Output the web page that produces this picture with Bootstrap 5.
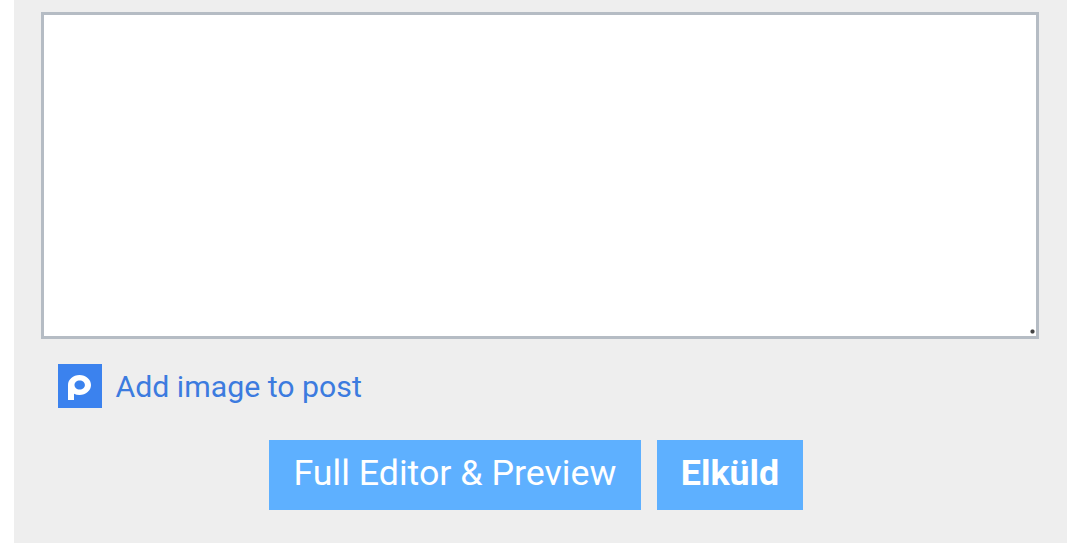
<!DOCTYPE html>
<html lang="hu">
<head>
<meta charset="utf-8">
<title>Reply</title>
<link href="https://cdn.jsdelivr.net/npm/bootstrap@5.3.0/dist/css/bootstrap.min.css" rel="stylesheet">
<style>
html, body { height: 543px; overflow: hidden; background: #fff; font-family: Roboto, sans-serif; }
.reply-panel { margin: 0 13px 0 14px; height: 543px; background: #eee; padding: 12px 28px 0 27px; }
.reply-box { display: block; width: 100%; height: 327px; border: 3px solid #b5bcc4; background: #fff; border-radius: 0; outline: 0; padding: 4px; }
.reply-box::-webkit-resizer { background: radial-gradient(circle at 11.5px 10.500px, #444 0 1.5px, transparent 2.6px); }
.img-row { margin: 25px 0 0 17px; gap: 13.5px; }
.img-logo { width: 44px; height: 44px; display: block; flex: none; }
.img-link { color: #3c7bdf; font-size: 30.25px; line-height: 44px; text-decoration: none; position: relative; top: 1px; }
.btn-row { margin-top: 32px; gap: 16px; padding-right: 8px; }
.send-btn { background: #5eb0ff; border: 0; border-radius: 0; color: #fff; font-size: 35.75px; height: 70px; padding: 0 25px 3px; }
.send-btn:hover { background: #5eb0ff; color: #fff; }
.send-first { padding-left: 24.5px; padding-right: 24.5px; }
.send-strong { font-weight: 700; padding-left: 24px; padding-right: 24px; }
</style>
</head>
<body>
<div class="reply-panel">
  <textarea class="reply-box" aria-label="Message"></textarea>
  <div class="img-row d-flex align-items-center">
    <svg class="img-logo" viewBox="0 0 44 44" aria-hidden="true">
      <rect width="44" height="44" fill="#3b82ee"/>
      <path fill="#fff" fill-rule="evenodd" d="M10 21C10 15.500 15.100 11 21.500 11C27.900 11 33 15.500 33 21C33 26.500 27.900 31 21.500 31C19.500 31 17.700 30.600 16 29.800V36H10ZM16.500 21C16.500 23.500 18.700 25.500 21.700 25.500C24.700 25.500 26.900 23.500 26.900 21C26.900 18.500 24.700 16.500 21.700 16.500C18.700 16.500 16.500 18.500 16.500 21Z"/>
    </svg>
    <a class="img-link" href="#">Add image to post</a>
  </div>
  <div class="btn-row d-flex justify-content-center">
    <button type="button" class="btn send-btn send-first">Full Editor &amp; Preview</button>
    <button type="button" class="btn send-btn send-strong">Elküld</button>
  </div>
</div>
<script src="https://cdn.jsdelivr.net/npm/bootstrap@5.3.0/dist/js/bootstrap.bundle.min.js"></script>
</body>
</html>
